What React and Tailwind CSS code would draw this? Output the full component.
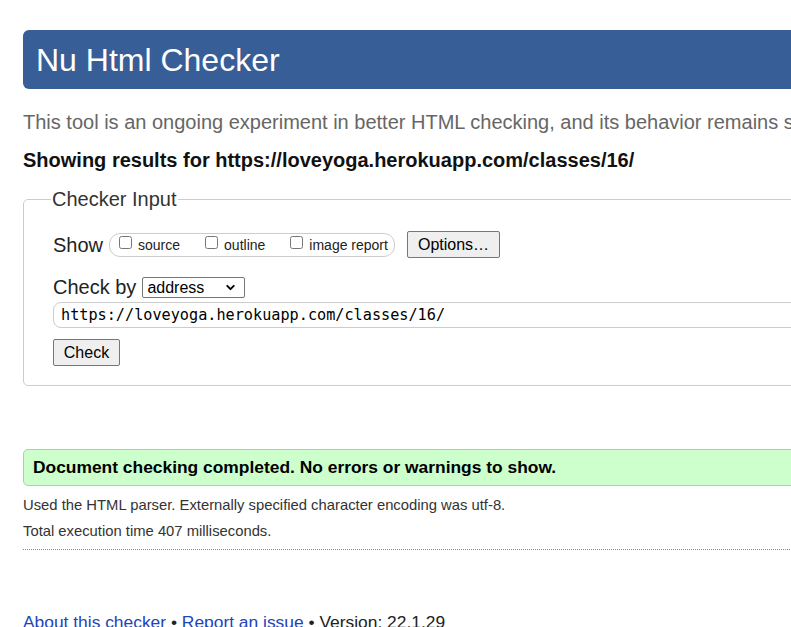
import { ChevronDown } from 'lucide-react';

const ShowOption = ({ label }) => (
    <label className="flex items-start">
        <input type="checkbox" className="w-[13px] h-[13px] m-0 mt-[1px]" />
        <span className="ml-[6px] text-[14px] leading-[20px] text-[#222]">{label}</span>
    </label>
);

const App = () => {
    return (
        <div className="w-[791px] h-[627px] overflow-hidden bg-white">
            <div className="w-[1200px] pl-[23px] pt-[30px] text-[#222] font-['Liberation_Sans',Arial,sans-serif]">
                {/* ── Header ─────────────────────────────── */}
                <h1 className="h-[59px] bg-[#375e97] rounded-[6px] pl-[13px] flex items-center text-white text-[32px] leading-[40px]">
                    Nu Html Checker
                </h1>

                <p className="mt-[21px] text-[20px] leading-[24px] text-[#666] whitespace-nowrap">
                    This tool is an ongoing experiment in better HTML checking, and its behavior remains subject to change
                </p>

                <p className="mt-[14px] text-[20px] leading-[24px] font-bold text-[#111] whitespace-nowrap">
                    Showing results for https://loveyoga.herokuapp.com/classes/16/
                </p>

                {/* ── Checker input ──────────────────────── */}
                <fieldset className="mt-[15px] border border-[#ccc] rounded-[5px] pl-[29px] pb-[19px]">
                    <legend className="-ml-[2px] px-px text-[20px] leading-[24px] text-[#333]">Checker Input</legend>

                    <div className="mt-[20px] flex items-center h-[27px]">
                        <span className="text-[20px] leading-[24px]">Show</span>
                        <div className="ml-[6px] h-[24px] w-[286px] border border-[#ccc] rounded-[11px] pl-[9px] pt-px flex items-start gap-[25px]">
                            <ShowOption label="source" />
                            <ShowOption label="outline" />
                            <ShowOption label="image report" />
                        </div>
                        <button className="ml-[12px] h-[27px] w-[93px] border border-[#767676] rounded-[2px] bg-[#efefef] text-[16px] leading-[20px] text-black">
                            Options…
                        </button>
                    </div>

                    <div className="mt-[17px] flex items-center h-[24px]">
                        <span className="text-[20px] leading-[24px]">Check by</span>
                        <div className="ml-[6px] w-[103px] h-[21px] border border-[#767676] rounded-[2px] flex items-center justify-between pl-[4px] pr-[7px] text-[16px] leading-[19px] text-black">
                            <span>address</span>
                            <ChevronDown className="w-[13px] h-[13px]" strokeWidth={3.5} />
                        </div>
                    </div>

                    <div className="mt-[3px] h-[26px] border border-[#ccc] rounded-[8px] pl-[7px] flex items-center text-[15.2px] text-black font-['DejaVu_Sans_Mono',monospace]">
                        https://loveyoga.herokuapp.com/classes/16/
                    </div>

                    <button className="mt-[11px] h-[27px] w-[67px] border border-[#767676] rounded-[2px] bg-[#efefef] text-[16px] leading-[20px] text-black">
                        Check
                    </button>
                </fieldset>

                {/* ── Results ────────────────────────────── */}
                <div className="mt-[63px] h-[37px] bg-[#ccffcc] border border-[#a6d5a6] rounded-[5px] pl-[9px] flex items-center">
                    <p className="text-[17.4px] font-bold text-black whitespace-nowrap">Document checking completed. No errors or warnings to show.</p>
                </div>

                <p className="mt-[9px] text-[14.8px] leading-[20px] text-[#333] whitespace-nowrap">
                    Used the HTML parser. Externally specified character encoding was utf-8.
                </p>
                <p className="mt-[6px] text-[14.8px] leading-[20px] text-[#333] whitespace-nowrap">
                    Total execution time 407 milliseconds.
                </p>

                <hr className="mt-[8px] border-0 border-t border-dotted border-[#888]" />

                <p className="mt-[61px] text-[17.4px] leading-[22px] text-[#222] whitespace-nowrap">
                    <a href="#" className="text-[#2244bb]">About this checker</a>
                    {' • '}
                    <a href="#" className="text-[#2244bb]">Report an issue</a>
                    {' • Version: 22.1.29'}
                </p>
            </div>
        </div>
    );
};

export default App;
